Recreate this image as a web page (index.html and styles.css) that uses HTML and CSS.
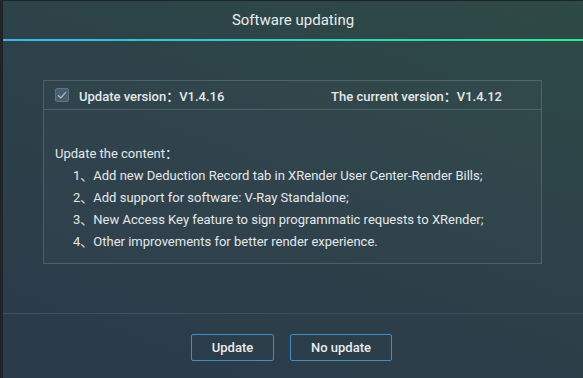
FILE: index.html
```html
<!DOCTYPE html>
<html lang="en">
<head>
    <meta charset="UTF-8">
    <title>Software updating</title>
    <link rel="stylesheet" href="styles.css">
</head>
<body>
    <div class="dialog">
        <div class="title">Software updating</div>
        <div class="title-bar"></div>
        <div class="body">
            <div class="info-box">
                <div class="info-head">
                    <div class="version-new">
                        <span class="check">
                            <svg width="10" height="8" viewBox="0 0 10 8"><path d="M1 4.2 L3.8 6.8 L9 1.2" fill="none" stroke="#a9c0cd" stroke-width="1.2"/></svg>
                        </span>
                        Update version：V1.4.16
                    </div>
                    <div class="version-current">The current version：V1.4.12</div>
                </div>
                <div class="info-content">
                    <div class="content-title">Update the content：</div>
                    <ul class="change-list">
                        <li>1、Add new Deduction Record tab in XRender User Center-Render Bills;</li>
                        <li>2、Add support for software: V-Ray Standalone;</li>
                        <li>3、New Access Key feature to sign programmatic requests to XRender;</li>
                        <li>4、Other improvements for better render experience.</li>
                    </ul>
                </div>
            </div>
        </div>
        <div class="footer">
            <button class="btn btn-update">Update</button>
            <button class="btn btn-skip">No update</button>
        </div>
    </div>
</body>
</html>
```

FILE: styles.css
```css
* { box-sizing: border-box; margin: 0; padding: 0; }
body {
    font-family: Roboto, 'Noto Sans CJK SC', sans-serif;
    background-color: #1e2429;
    color: #e4e8ea;
    overflow: hidden;
}
.dialog {
    margin: 1px 0 0 3px;
    height: 377px;
    display: flex;
    flex-direction: column;
    background: linear-gradient(200deg, #2e4a45 0%, #2c4149 45%, #2a3b4a 100%);
}
.title {
    height: 38px;
    line-height: 38px;
    text-align: center;
    font-size: 15px;
    color: #e8ecee;
}
.title-bar {
    height: 2px;
    background: linear-gradient(to right, #3bb6ec, #2ee996);
}
.body {
    flex: 1;
    padding: 39px 41px 0 40px;
}
.info-box {
    border: 1px solid rgba(150, 175, 185, 0.28);
    background: rgba(255, 255, 255, 0.02);
}
.info-head {
    height: 29px;
    display: flex;
    align-items: center;
    justify-content: space-between;
    padding: 0 39px 0 11px;
    border-bottom: 1px solid rgba(150, 175, 185, 0.28);
    font-size: 13px;
    font-weight: 500;
}
.version-new { display: flex; align-items: center; }
.check {
    width: 14px;
    height: 14px;
    margin-right: 10px;
    display: flex;
    align-items: center;
    justify-content: center;
    background: #475f6c;
    border: 1px solid #5d7684;
    border-radius: 2px;
}
.info-content {
    padding: 33px 11px 10px;
    font-size: 13px;
    line-height: 22px;
}
.change-list { list-style: none; padding-left: 18px; }
.footer {
    height: 65px;
    border-top: 1px solid #3c505d;
    display: flex;
    justify-content: center;
    gap: 16px;
    padding-top: 20px;
    padding-right: 3px;
}
.btn {
    height: 27px;
    font-family: inherit;
    font-size: 13px;
    font-weight: 500;
    color: #e8ecee;
    background: transparent;
    border: 1px solid #3f8fc6;
    border-radius: 2px;
}
.btn-update { width: 83px; }
.btn-skip { width: 102px; }
```
